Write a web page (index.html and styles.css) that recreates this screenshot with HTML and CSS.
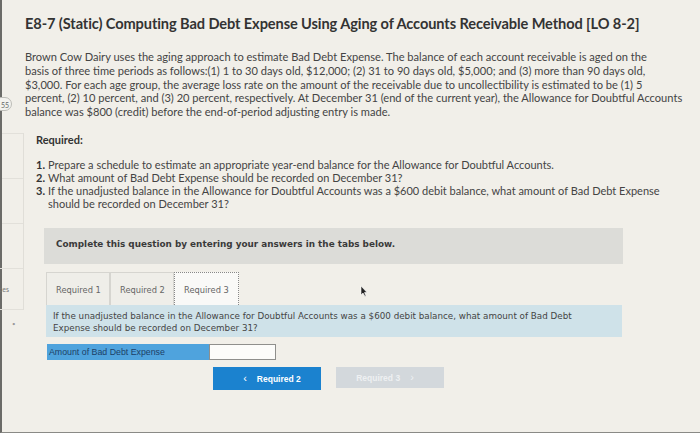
FILE: index.html
```html
<!DOCTYPE html>
<html>
<head>
<meta charset="utf-8">
<link rel="stylesheet" href="styles.css">
</head>
<body>
<div class="page">
  <aside class="side">
    <div class="pill">55</div>
    <div class="side-rows">
      <div class="row"></div>
      <div class="row"></div>
      <div class="row"></div>
      <div class="row lbl">ces</div>
    </div>
    <div class="dot">•</div>
  </aside>
  <main class="main">
    <h1 class="title">E8-7 (Static) Computing Bad Debt Expense Using Aging of Accounts Receivable Method [LO 8-2]</h1>
    <p class="intro">Brown Cow Dairy uses the aging approach to estimate Bad Debt Expense. The balance of each account receivable is aged on the<br>basis of three time periods as follows:(1) 1 to 30 days old, $12,000; (2) 31 to 90 days old, $5,000; and (3) more than 90 days old,<br>$3,000. For each age group, the average loss rate on the amount of the receivable due to uncollectibility is estimated to be (1) 5<br>percent, (2) 10 percent, and (3) 20 percent, respectively. At December 31 (end of the current year), the Allowance for Doubtful Accounts<br>balance was $800 (credit) before the end-of-period adjusting entry is made.</p>
    <h2 class="req">Required:</h2>
    <ol class="list">
      <li><b>1.</b><span>Prepare a schedule to estimate an appropriate year-end balance for the Allowance for Doubtful Accounts.</span></li>
      <li><b>2.</b><span>What amount of Bad Debt Expense should be recorded on December 31?</span></li>
      <li><b>3.</b><span>If the unadjusted balance in the Allowance for Doubtful Accounts was a $600 debit balance, what amount of Bad Debt Expense<br>should be recorded on December 31?</span></li>
    </ol>
    <div class="banner">Complete this question by entering your answers in the tabs below.</div>
    <div class="tabs">
      <div class="tab">Required 1</div>
      <div class="tab">Required 2</div>
      <div class="tab active">Required 3</div>
      <svg class="cursor" width="8" height="12" viewBox="0 0 8 12"><path d="M1 1 L1 10 L3 8 L5 11.5 L6 11 L4.5 7.5 L7 7.5 Z" fill="#222" stroke="#fff" stroke-width="0.6"/></svg>
    </div>
    <div class="panel">If the unadjusted balance in the Allowance for Doubtful Accounts was a $600 debit balance, what amount of Bad Debt<br>Expense should be recorded on December 31?</div>
    <div class="answer">
      <div class="answer-label">Amount of Bad Debt Expense</div>
      <div class="answer-input"></div>
    </div>
    <div class="nav">
      <div class="btn prev"><span class="chev">&lsaquo;</span>Required 2</div>
      <div class="btn next">Required 3<span class="chev">&rsaquo;</span></div>
    </div>
  </main>
</div>
</body>
</html>
```
FILE: styles.css
```css
html, body {
  margin: 0;
  padding: 0;
}
body {
  width: 700px;
  height: 433px;
  overflow: hidden;
  background: #f1efe9;
  font-family: Lato, "Liberation Sans", sans-serif;
  color: #3a3a3a;
}
.page {
  display: flex;
  height: 432px;
  border-left: 2px solid #6b6b68;
  border-bottom: 1px solid #8a8a86;
}
.side {
  width: 22px;
  position: relative;
  flex: none;
}
.pill {
  margin-top: 97px;
  margin-left: -8px;
  width: 18px;
  height: 14px;
  border: 1px solid #bdbdb8;
  border-radius: 8px;
  font-size: 7px;
  line-height: 14px;
  text-align: right;
  padding-right: 2px;
  box-sizing: border-box;
  color: #666;
  background: #f3f2ee;
}
.side-rows {
  margin-top: 22px;
  border-right: 1px solid #e0ded8;
}
.row {
  height: 44px;
  border-top: 1px solid #e2e0da;
}
.row.lbl {
  height: 40px;
  border-bottom: 1px solid #e2e0da;
  font-size: 7px;
  color: #777;
  line-height: 40px;
  margin-left: -3px;
}
.dot {
  font-size: 6px;
  color: #999;
  margin-left: 10px;
  margin-top: 10px;
}
.main {
  flex: 1;
  padding-left: 1px;
}
.title {
  margin: 14px 0 0 0;
  font-size: 14.6px;
  font-weight: 700;
  color: #333;
  line-height: 20px;
  letter-spacing: -0.1px;
}
.intro {
  margin: 16px 0 0 0;
  font-size: 11.1px;
  line-height: 13.8px;
  color: #444;
}
.req {
  margin: 14px 0 0 11px;
  font-size: 11px;
  font-weight: 700;
  color: #333;
  line-height: 14px;
}
.list {
  list-style: none;
  margin: 11px 0 0 11px;
  padding: 0;
  font-size: 11px;
  line-height: 13px;
  color: #444;
}
.list li {
  display: flex;
  gap: 3px;
}
.list li b {
  font-weight: 700;
  color: #333;
}
.banner {
  margin: 18px 0 0 19px;
  width: 579px;
  height: 36px;
  box-sizing: border-box;
  background: #dcdcd8;
  padding: 11px 0 0 12px;
  font-family: "DejaVu Sans", sans-serif;
  font-weight: 700;
  font-size: 8.85px;
  color: #3a3a3a;
}
.tabs {
  display: flex;
  margin: 8px 0 0 21px;
  position: relative;
  height: 33px;
}
.tab {
  width: 64px;
  height: 33px;
  box-sizing: border-box;
  border: 1px solid #d6d5d0;
  border-bottom: none;
  background: #efeee9;
  font-family: "DejaVu Sans", sans-serif;
  font-size: 8.3px;
  color: #666;
  padding-left: 9px;
  line-height: 34px;
}
.tab.active {
  background: #f9f9f7;
  border: 1px dotted #888;
  border-bottom: none;
  width: 65px;
}
.cursor {
  position: absolute;
  left: 314px;
  top: 13px;
}
.panel {
  margin: 0 0 0 21px;
  width: 576px;
  height: 32px;
  box-sizing: border-box;
  background: #cfe2e9;
  padding: 5px 0 0 7px;
  font-family: "DejaVu Sans", sans-serif;
  font-size: 8.75px;
  line-height: 12.5px;
  color: #444;
}
.answer {
  display: flex;
  margin: 7px 0 0 22px;
  height: 16px;
}
.answer-label {
  width: 162px;
  background: #4fa3dd;
  font-family: "Liberation Sans", sans-serif;
  font-size: 8.8px;
  line-height: 16px;
  color: #1d3f66;
  padding-left: 2px;
  box-sizing: border-box;
}
.answer-input {
  width: 67px;
  box-sizing: border-box;
  border: 1px solid #8f8f8c;
  background: #fcfcfa;
}
.nav {
  display: flex;
  gap: 15px;
  margin: 7px 0 0 188px;
}
.btn {
  width: 108px;
  height: 23px;
  box-sizing: border-box;
  font-family: "Liberation Sans", sans-serif;
  font-weight: 700;
  font-size: 8.5px;
  line-height: 23px;
  text-align: center;
  color: #fff;
}
.btn.prev {
  background: #1b82cf;
}
.btn.next {
  background: #d3d8dc;
  color: #eef0f2;
  height: 21px;
  line-height: 21px;
}
.chev {
  font-size: 11px;
  margin: 0 10px;
  font-weight: 400;
}
```
